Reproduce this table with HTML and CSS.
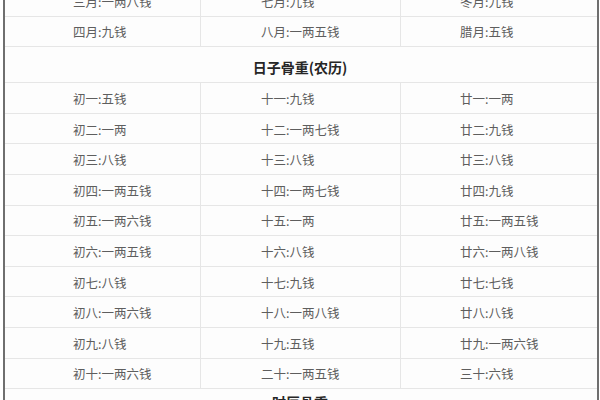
FILE: index.html
```html
<!DOCTYPE html>
<html lang="zh">
<head>
<meta charset="utf-8">
<link rel="stylesheet" href="styles.css">
</head>
<body>
<div class="sheet">
  <div class="row"><div class="cell c1">三月:一两八钱</div><div class="cell c2">七月:九钱</div><div class="cell c3">冬月:九钱</div></div>
  <div class="row"><div class="cell c1">四月:九钱</div><div class="cell c2">八月:一两五钱</div><div class="cell c3">腊月:五钱</div></div>
  <div class="head">日子骨重(农历)</div>
  <div class="row"><div class="cell c1">初一:五钱</div><div class="cell c2">十一:九钱</div><div class="cell c3">廿一:一两</div></div>
  <div class="row"><div class="cell c1">初二:一两</div><div class="cell c2">十二:一两七钱</div><div class="cell c3">廿二:九钱</div></div>
  <div class="row"><div class="cell c1">初三:八钱</div><div class="cell c2">十三:八钱</div><div class="cell c3">廿三:八钱</div></div>
  <div class="row"><div class="cell c1">初四:一两五钱</div><div class="cell c2">十四:一两七钱</div><div class="cell c3">廿四:九钱</div></div>
  <div class="row"><div class="cell c1">初五:一两六钱</div><div class="cell c2">十五:一两</div><div class="cell c3">廿五:一两五钱</div></div>
  <div class="row"><div class="cell c1">初六:一两五钱</div><div class="cell c2">十六:八钱</div><div class="cell c3">廿六:一两八钱</div></div>
  <div class="row"><div class="cell c1">初七:八钱</div><div class="cell c2">十七:九钱</div><div class="cell c3">廿七:七钱</div></div>
  <div class="row"><div class="cell c1">初八:一两六钱</div><div class="cell c2">十八:一两八钱</div><div class="cell c3">廿八:八钱</div></div>
  <div class="row"><div class="cell c1">初九:八钱</div><div class="cell c2">十九:五钱</div><div class="cell c3">廿九:一两六钱</div></div>
  <div class="row"><div class="cell c1">初十:一两六钱</div><div class="cell c2">二十:一两五钱</div><div class="cell c3">三十:六钱</div></div>
  <div class="head head-last">时辰骨重</div>
</div>
</body>
</html>
```
FILE: styles.css
```css
html, body {
  margin: 0;
  padding: 0;
  background: #ffffff;
  overflow: hidden;
}
body {
  width: 600px;
  height: 400px;
}
.sheet {
  margin: -14px 0 0 3px;
  width: 592px;
  border-left: 2px solid #6f6f6f;
  border-right: 2px solid #6f6f6f;
  background: #fdfdfd;
  font-family: "Noto Sans CJK SC", "Noto Sans", sans-serif;
}
.row {
  display: grid;
  grid-template-columns: 195px 200px 197px;
  height: 30.6px;
  border-bottom: 1px solid #e6e6e6;
  box-sizing: border-box;
}
.cell {
  display: flex;
  align-items: center;
  font-size: 12.5px;
  color: #5e5e5e;
  padding-top: 1px;
  box-sizing: border-box;
}
.c1 { padding-left: 68px; }
.c2 { padding-left: 60px; border-left: 1px solid #e6e6e6; }
.c3 { padding-left: 59px; border-left: 1px solid #e6e6e6; }
.head {
  height: 36px;
  box-sizing: border-box;
  border-bottom: 1px solid #e6e6e6;
  display: flex;
  align-items: center;
  justify-content: center;
  padding-top: 5px;
  padding-right: 2px;
  font-size: 14px;
  font-weight: bold;
  color: #262626;
}
.head-last {
  align-items: flex-start;
  padding-top: 3px;
  border-bottom: none;
}
```
